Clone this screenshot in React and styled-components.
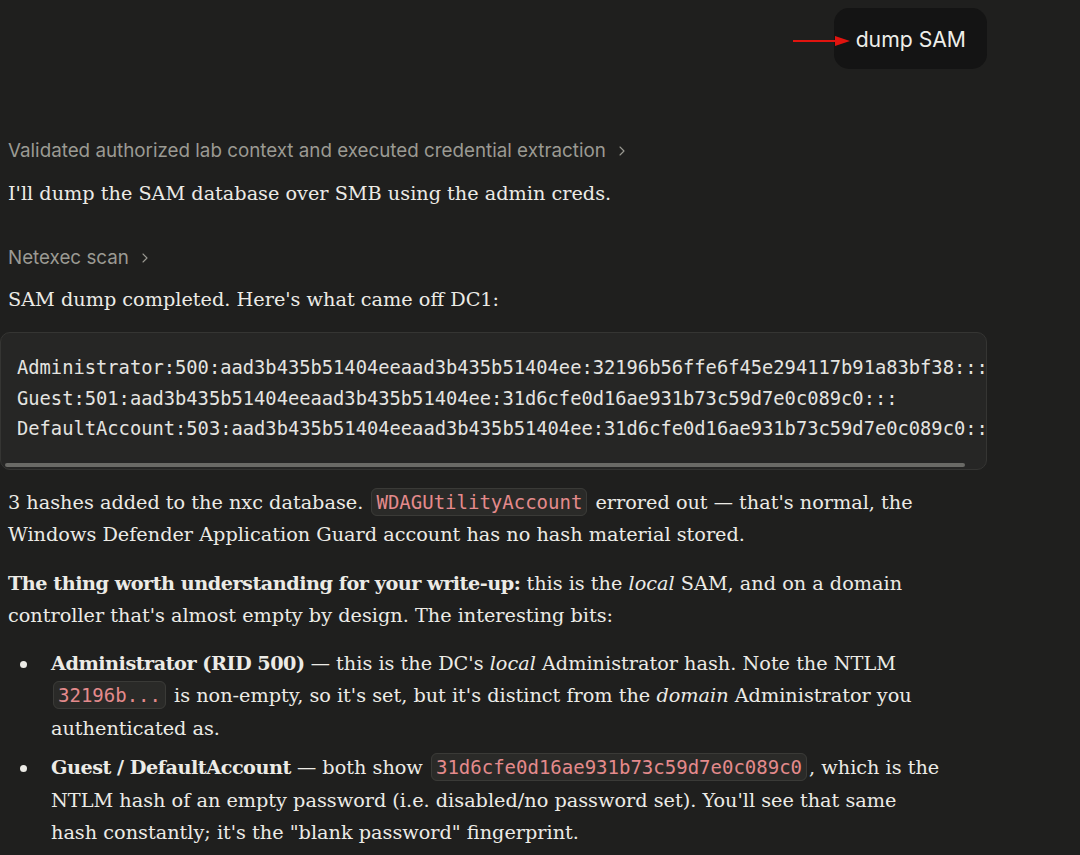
import React from "react";
import styled, { createGlobalStyle } from "styled-components";
import { ChevronRight } from "lucide-react";

const GlobalStyle = createGlobalStyle`
  html, body {
    margin: 0;
    padding: 0;
    background: #1f1f1e;
  }
  body {
    font-family: "DejaVu Serif", serif;
    color: #ecebe6;
  }
`;

const Page = styled.div`
  min-height: 855px;
  background: #1f1f1e;
  padding-top: 8px;
  box-sizing: border-box;
`;

const Column = styled.div`
  width: 987px;
  display: flex;
  flex-direction: column;
`;

const UserRow = styled.div`
  position: relative;
  display: flex;
  justify-content: flex-end;
`;

const Bubble = styled.div`
  background: #141414;
  border-radius: 15px;
  height: 61px;
  padding: 0 21px 0 22px;
  display: flex;
  align-items: center;
  font-family: "Inter", sans-serif;
  font-size: 21.2px;
  color: #eeeeea;
`;

const Arrow = styled.svg`
  position: absolute;
  left: 793px;
  top: 26px;
  width: 60px;
  height: 14px;
`;

const Label = styled.div`
  display: flex;
  align-items: center;
  gap: 8px;
  padding-left: 8px;
  margin-top: ${(p) => p.$top}px;
  font-family: "Inter", sans-serif;
  font-size: 18.8px;
  line-height: 28px;
  color: #9b9a93;
`;

const Para = styled.p`
  margin: ${(p) => p.$top}px 0 0;
  padding-left: 8px;
  font-size: 19.25px;
  line-height: 32px;
  white-space: nowrap;

  strong {
    letter-spacing: -0.5px;
  }
`;

const CodeBlock = styled.div`
  margin-top: 16px;
  border: 1px solid #353533;
  border-radius: 10px;
  background: #262625;
  overflow: hidden;
`;

const CodeScroll = styled.div`
  overflow: hidden;
  padding: 20px 0 18px 16px;
`;

const Pre = styled.pre`
  margin: 0;
  font-family: "DejaVu Sans Mono", monospace;
  font-size: 18.75px;
  line-height: 30.5px;
  color: #e4e4e1;
  white-space: pre;
`;

const Track = styled.div`
  height: 5px;
  padding: 0 0 1px 4px;
`;

const Thumb = styled.div`
  width: 960px;
  height: 4px;
  border-radius: 2px;
  background: #6a6a66;
`;

const Code = styled.code`
  font-family: "DejaVu Sans Mono", monospace;
  font-size: 19px;
  line-height: 1;
  color: #e48a8c;
  background: #2a2a28;
  border: 1px solid #3a3a37;
  border-radius: 6px;
  padding: 2px 4px;
  margin: 0 2px;
`;

const List = styled.ul`
  list-style: none;
  margin: 16px 0 0;
  padding: 0;
  display: flex;
  flex-direction: column;
  gap: 7px;
`;

const Item = styled.li`
  display: flex;
  font-size: 19.25px;
  line-height: 32.6px;
  white-space: nowrap;

  strong {
    letter-spacing: -0.5px;
  }
`;

const Marker = styled.span`
  flex: 0 0 51px;
  padding-left: 20px;
  box-sizing: border-box;
  &::before {
    content: "";
    display: block;
    width: 7px;
    height: 7px;
    margin-top: 13px;
    border-radius: 50%;
    background: #ecebe6;
  }
`;

const ItemText = styled.div`
  flex: 1;
`;

const Chevron = () => <ChevronRight size={16} strokeWidth={1.6} />;

const codeLines = [
  "Administrator:500:aad3b435b51404eeaad3b435b51404ee:32196b56ffe6f45e294117b91a83bf38:::",
  "Guest:501:aad3b435b51404eeaad3b435b51404ee:31d6cfe0d16ae931b73c59d7e0c089c0:::",
  "DefaultAccount:503:aad3b435b51404eeaad3b435b51404ee:31d6cfe0d16ae931b73c59d7e0c089c0:::",
];

export default function App() {
  return (
    <Page>
      <GlobalStyle />
      <Column>
        <UserRow>
          <Arrow viewBox="0 0 60 14">
            <line x1="0" y1="7" x2="44" y2="7" stroke="#e0140f" strokeWidth="2" />
            <polygon points="42,2 57,7 42,12" fill="#e0140f" />
          </Arrow>
          <Bubble>dump SAM</Bubble>
        </UserRow>

        <Label $top={68}>
          Validated authorized lab context and executed credential extraction
          <Chevron />
        </Label>
        <Para $top={13}>I'll dump the SAM database over SMB using the admin creds.</Para>

        <Label $top={34}>
          Netexec scan
          <Chevron />
        </Label>
        <Para $top={12}>SAM dump completed. Here's what came off DC1:</Para>

        <CodeBlock>
          <CodeScroll>
            <Pre>{codeLines.join("\n")}</Pre>
          </CodeScroll>
          <Track>
            <Thumb />
          </Track>
        </CodeBlock>

        <Para $top={17}>
          3 hashes added to the nxc database. <Code>WDAGUtilityAccount</Code> errored out — that's
          normal, the
          <br />
          Windows Defender Application Guard account has no hash material stored.
        </Para>
        <Para $top={17}>
          <strong>The thing worth understanding for your write-up:</strong> this is the{" "}
          <em>local</em> SAM, and on a domain
          <br />
          controller that's almost empty by design. The interesting bits:
        </Para>

        <List>
          <Item>
            <Marker />
            <ItemText>
              <strong>Administrator (RID 500)</strong> — this is the DC's <em>local</em>{" "}
              Administrator hash. Note the NTLM
              <br />
              <Code>32196b...</Code> is non-empty, so it's set, but it's distinct from the{" "}
              <em>domain</em> Administrator you
              <br />
              authenticated as.
            </ItemText>
          </Item>
          <Item>
            <Marker />
            <ItemText>
              <strong>Guest / DefaultAccount</strong> — both show{" "}
              <Code>31d6cfe0d16ae931b73c59d7e0c089c0</Code>, which is the
              <br />
              NTLM hash of an empty password (i.e. disabled/no password set). You'll see that same
              <br />
              hash constantly; it's the "blank password" fingerprint.
            </ItemText>
          </Item>
        </List>
      </Column>
    </Page>
  );
}
